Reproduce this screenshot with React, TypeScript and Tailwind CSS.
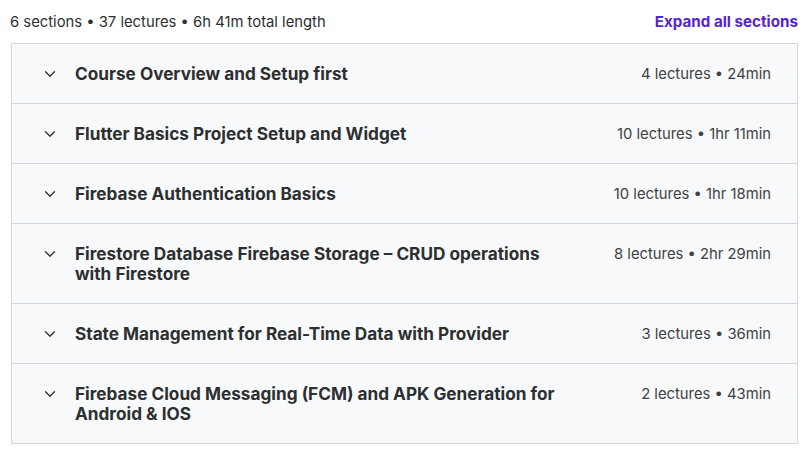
import { ChevronDown } from "lucide-react"

type Section = {
    title: string
    lectures: number
    length: string
}

const sections: Section[] = [
    { title: "Course Overview and Setup first", lectures: 4, length: "24min" },
    { title: "Flutter Basics Project Setup and Widget", lectures: 10, length: "1hr 11min" },
    { title: "Firebase Authentication Basics", lectures: 10, length: "1hr 18min" },
    { title: "Firestore Database Firebase Storage – CRUD operations with Firestore", lectures: 8, length: "2hr 29min" },
    { title: "State Management for Real-Time Data with Provider", lectures: 3, length: "36min" },
    { title: "Firebase Cloud Messaging (FCM) and APK Generation for Android & IOS", lectures: 2, length: "43min" },
]

const App = () => {
    return (
        <div className="w-[810px] h-[454px] bg-white text-[#2d2f31] font-['Inter',sans-serif]">
            <div className="flex items-center justify-between h-[43px] pt-[2px] pl-[10px] pr-[12px]">
                <span className="text-[14.8px]">6 sections • 37 lectures • 6h 41m total length</span>
                <button className="text-[15.2px] font-bold text-[#5624d0]">Expand all sections</button>
            </div>
            <div className="ml-[11px] w-[787px] border border-[#d1d7dc]">
                {sections.map((s, i) => (
                    <div
                        key={i}
                        className={`flex items-start bg-[#f7f9fa] py-[19.5px] pl-[29px] pr-[26px] ${i > 0 ? "border-t border-[#d1d7dc]" : ""}`}
                    >
                        <ChevronDown className="w-[18px] h-[18px] mt-[1px] shrink-0" strokeWidth={1.7} />
                        <h3 className="ml-[16px] w-[490px] text-[17.2px] leading-[20px] font-bold">{s.title}</h3>
                        <span className="ml-auto text-[14.8px] leading-[20px] whitespace-nowrap text-[#3e4143]">
                            {s.lectures} lectures • {s.length}
                        </span>
                    </div>
                ))}
            </div>
        </div>
    )
}

export default App
